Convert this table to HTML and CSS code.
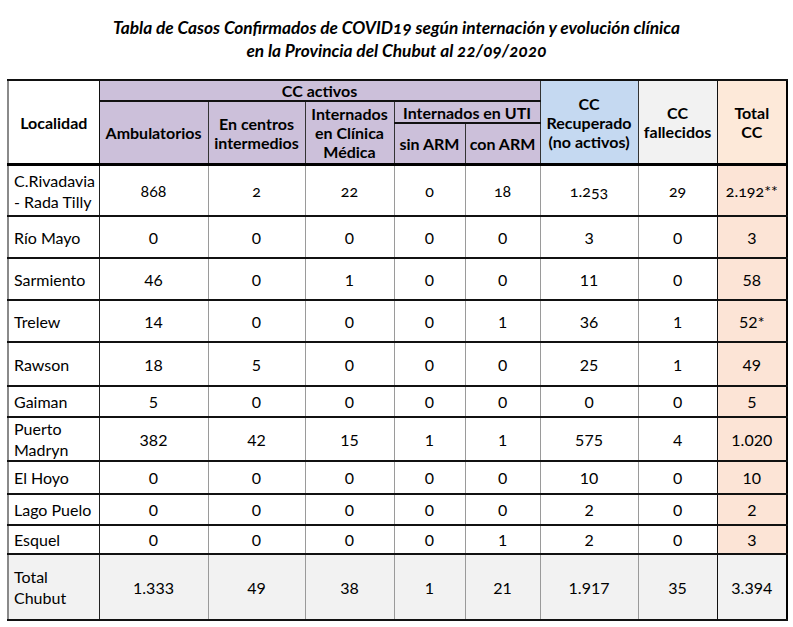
FILE: index.html
```html
<!DOCTYPE html>
<html lang="es">
<head>
<meta charset="utf-8">
<title>Casos COVID19 Chubut</title>
<link rel="stylesheet" href="styles.css">
</head>
<body>
<div class="page">
  <h1 class="title">Tabla de Casos Confirmados de COVID19 según internación y evolución clínica<br>en la Provincia del Chubut al 22/09/2020</h1>
  <table class="cases">
    <colgroup>
      <col class="c-loc"><col class="c-amb"><col class="c-cen"><col class="c-cli"><col class="c-sin"><col class="c-con"><col class="c-rec"><col class="c-fal"><col class="c-tot">
    </colgroup>
    <thead>
      <tr class="h1">
        <th rowspan="3" class="loc-h">Localidad</th>
        <th colspan="5" class="purple">CC activos</th>
        <th rowspan="3" class="blue">CC<br>Recuperado<br>(no activos)</th>
        <th rowspan="3" class="grey fal">CC<br>fallecidos</th>
        <th rowspan="3" class="peach">Total<br>CC</th>
      </tr>
      <tr class="h2">
        <th rowspan="2" class="purple">Ambulatorios</th>
        <th rowspan="2" class="purple">En centros<br>intermedios</th>
        <th rowspan="2" class="purple">Internados<br>en Clínica<br>Médica</th>
        <th colspan="2" class="purple">Internados en UTI</th>
      </tr>
      <tr class="h3">
        <th class="purple">sin ARM</th>
        <th class="purple">con ARM</th>
      </tr>
    </thead>
    <tbody>
      <tr class="r52 old">
        <td class="loc">C.Rivadavia<br>- Rada Tilly</td><td>868</td><td>2</td><td>22</td><td>0</td><td>18</td><td>1.253</td><td class="fal">29</td><td class="tot">2.192**</td>
      </tr>
      <tr class="r42">
        <td class="loc">Río Mayo</td><td>0</td><td>0</td><td>0</td><td>0</td><td>0</td><td>3</td><td class="fal">0</td><td class="tot">3</td>
      </tr>
      <tr class="r42">
        <td class="loc">Sarmiento</td><td>46</td><td>0</td><td>1</td><td>0</td><td>0</td><td>11</td><td class="fal">0</td><td class="tot">58</td>
      </tr>
      <tr class="r42">
        <td class="loc">Trelew</td><td>14</td><td>0</td><td>0</td><td>0</td><td>1</td><td>36</td><td class="fal">1</td><td class="tot">52*</td>
      </tr>
      <tr class="r45">
        <td class="loc">Rawson</td><td>18</td><td>5</td><td>0</td><td>0</td><td>0</td><td>25</td><td class="fal">1</td><td class="tot">49</td>
      </tr>
      <tr class="r31">
        <td class="loc">Gaiman</td><td>5</td><td>0</td><td>0</td><td>0</td><td>0</td><td>0</td><td class="fal">0</td><td class="tot">5</td>
      </tr>
      <tr class="r43">
        <td class="loc">Puerto<br>Madryn</td><td>382</td><td>42</td><td>15</td><td>1</td><td>1</td><td>575</td><td class="fal">4</td><td class="tot">1.020</td>
      </tr>
      <tr class="r32">
        <td class="loc">El Hoyo</td><td>0</td><td>0</td><td>0</td><td>0</td><td>0</td><td>10</td><td class="fal">0</td><td class="tot">10</td>
      </tr>
      <tr class="r31">
        <td class="loc">Lago Puelo</td><td>0</td><td>0</td><td>0</td><td>0</td><td>0</td><td>2</td><td class="fal">0</td><td class="tot">2</td>
      </tr>
      <tr class="r29">
        <td class="loc">Esquel</td><td>0</td><td>0</td><td>0</td><td>0</td><td>1</td><td>2</td><td class="fal">0</td><td class="tot">3</td>
      </tr>
      <tr class="r66 total">
        <td class="loc">Total<br>Chubut</td><td>1.333</td><td>49</td><td>38</td><td>1</td><td>21</td><td>1.917</td><td class="fal">35</td><td>3.394</td>
      </tr>
    </tbody>
  </table>
</div>
</body>
</html>
```

FILE: styles.css
```css
html, body {
  margin: 0;
  padding: 0;
  background: #ffffff;
}

body {
  font-family: Lato, "Open Sans", "DejaVu Sans", sans-serif;
  color: #000;
}

.page {
  padding: 16px 7px 0 7px;
}

.title {
  margin: 0 0 17px 0;
  text-align: center;
  font-size: 17.3px;
  line-height: 23px;
  font-style: italic;
  font-weight: 700;
  font-variant-numeric: oldstyle-nums;
  color: #000;
}

.cases {
  width: 779px;
  border-collapse: collapse;
  table-layout: fixed;
  font-size: 16px;
  border-top: 2px solid #000;
  border-right: 2px solid #000;
  border-bottom: 2px solid #000;
  border-left: 2px solid #8a8a8a;
}

.c-loc { width: 91px; }
.c-amb { width: 109px; }
.c-cen { width: 97px; }
.c-cli { width: 89px; }
.c-sin { width: 71px; }
.c-con { width: 75px; }
.c-rec { width: 98px; }
.c-fal { width: 79px; }
.c-tot { width: 70px; }

th {
  font-weight: 700;
  line-height: 19px;
  padding: 0;
  text-align: center;
  vertical-align: middle;
  border: 1px solid #333;
  border-top: 2px solid #111;
  border-bottom: 2px solid #111;
}

thead .h1 th { height: 19px; }
thead .h2 th { height: 20px; }
thead .h3 th { height: 39px; border-bottom: 3px solid #000; }
thead th[rowspan="3"] { border-bottom: 3px solid #000; }
thead th[rowspan="2"] { border-bottom: 3px solid #000; }

.loc-h { background: #fff; border-right: 1px solid #111; }
.purple { background: #ccc0da; }
.blue { background: #c5d9f1; }
.grey { background: #f2f2f2; }
.peach { background: #fde9d9; }

td {
  padding: 0;
  text-align: center;
  vertical-align: middle;
  line-height: 21px;
  border-top: 2px solid #111;
  border-bottom: 2px solid #111;
  border-left: 1px solid #9a9a9a;
  border-right: 1px solid #9a9a9a;
}

td.loc {
  text-align: left;
  padding-left: 5px;
  border-right: 1px solid #222;
}

td.fal, th.fal { border-right: 1px solid #111; }

td.tot { background: #fce4d6; }

.old td { font-variant-numeric: oldstyle-nums; }
.old td.loc { font-variant-numeric: normal; }

.r52 td { height: 49px; }
.r42 td { height: 40px; }
.r45 td { height: 42px; }
.r43 td { height: 41px; }
.r32 td { height: 31px; }
.r31 td { height: 29px; }
.r29 td { height: 27px; }
.r66 td { height: 64px; }

.total td { background: #f2f2f2; }
```
